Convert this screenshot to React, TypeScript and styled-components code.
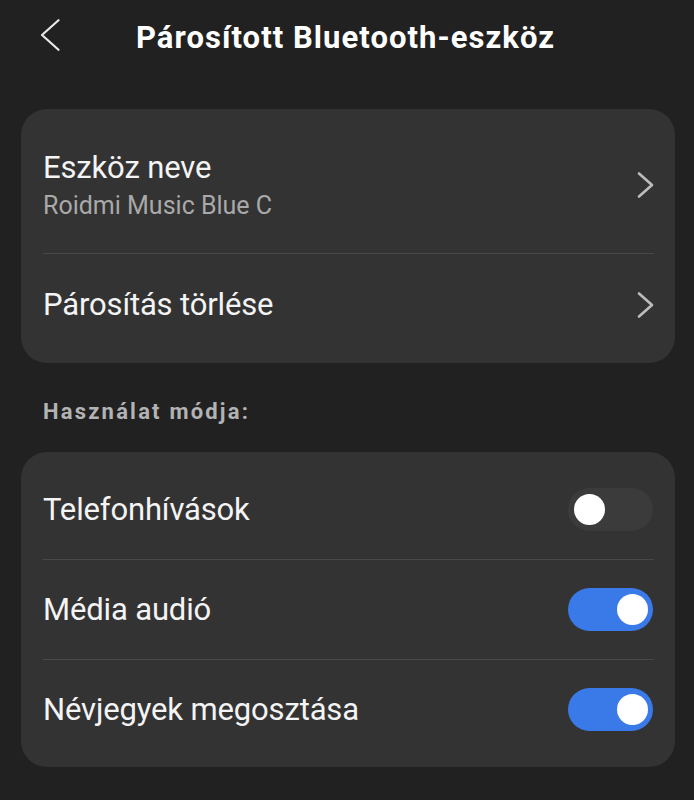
import React from "react";
import styled, { createGlobalStyle } from "styled-components";

const Global = createGlobalStyle`
  html, body { margin: 0; padding: 0; background: #212121; }
  body { font-family: Roboto, "Noto Sans", Arial, sans-serif; -webkit-font-smoothing: antialiased; }
`;

const Page = styled.div`
  width: 694px;
  min-height: 800px;
  background: #212121;
  padding: 0 19px 0 21px;
  box-sizing: border-box;
  display: flex;
  flex-direction: column;
`;

const TopBar = styled.header`
  height: 74px;
  display: flex;
  align-items: center;
  padding-left: 19px;
  gap: 76px;
`;

const BackButton = styled.button`
  background: none;
  border: 0;
  padding: 0;
  width: 20px;
  height: 32px;
  margin-top: -5px;
  display: flex;
  align-items: center;
  justify-content: center;
  color: #e8e8e8;
`;

const Title = styled.h1`
  margin: 0;
  font-size: 31px;
  font-weight: 700;
  color: #ffffff;
  letter-spacing: 1.05px;
`;

const Card = styled.section<{ $top: number }>`
  margin-top: ${(p) => p.$top}px;
  background: #333333;
  border-radius: 26px;
  padding: 8px 0;
  display: flex;
  flex-direction: column;
`;

const Row = styled.div<{ $h: number }>`
  height: ${(p) => p.$h}px;
  display: flex;
  align-items: center;
  justify-content: space-between;
  padding: 0 21px 0 22px;
`;

const Divider = styled.div`
  height: 1px;
  background: #484848;
  margin: 0 21px 0 22px;
`;

const TextBlock = styled.div`
  display: flex;
  flex-direction: column;
  padding-top: 3px;
`;

const Label = styled.div`
  font-size: 31px;
  line-height: 36px;
  color: #f4f4f4;
  letter-spacing: -0.15px;
`;

const Sub = styled.div`
  font-size: 25px;
  line-height: 36px;
  margin-top: 2px;
  color: #a9a9a9;
  letter-spacing: 0px;
`;

const SectionHeader = styled.h2`
  margin: 37px 0 0 22px;
  font-size: 22px;
  font-weight: 700;
  letter-spacing: 2.2px;
  color: #b3b3b3;
  line-height: 24px;
`;

const Track = styled.div<{ $on: boolean }>`
  width: 85px;
  height: 43px;
  border-radius: 22px;
  background: ${(p) => (p.$on ? "#3a7ae8" : "#3b3b3b")};
  display: flex;
  align-items: center;
  justify-content: ${(p) => (p.$on ? "flex-end" : "flex-start")};
  padding: 0 5px 0 6px;
  box-sizing: border-box;
  margin-right: 1px;
`;

const Knob = styled.div`
  width: 31px;
  height: 31px;
  border-radius: 50%;
  background: #ffffff;
`;

const ChevronLeft = () => (
  <svg width="20" height="32" viewBox="0 0 20 32" fill="none">
    <path d="M18.5 1.2 L2 16 L18.5 30.8" stroke="currentColor" strokeWidth="2.2" strokeLinecap="round" strokeLinejoin="round" />
  </svg>
);

const ChevronRight = () => (
  <svg width="17" height="26" viewBox="0 0 17 26" fill="none" style={{ color: "#bcbcbc" }}>
    <path d="M2 1.5 L15 13 L2 24.5" stroke="currentColor" strokeWidth="2.6" strokeLinecap="round" strokeLinejoin="round" />
  </svg>
);

const Toggle = ({ on }: { on: boolean }) => (
  <Track $on={on}>
    <Knob />
  </Track>
);

export default function App() {
  return (
    <>
      <Global />
      <Page>
        <TopBar>
          <BackButton aria-label="Vissza">
            <ChevronLeft />
          </BackButton>
          <Title>Párosított Bluetooth-eszköz</Title>
        </TopBar>

        <Card $top={35}>
          <Row $h={136}>
            <TextBlock>
              <Label>Eszköz neve</Label>
              <Sub>Roidmi Music Blue C</Sub>
            </TextBlock>
            <ChevronRight />
          </Row>
          <Divider />
          <Row $h={101}>
            <Label>Párosítás törlése</Label>
            <ChevronRight />
          </Row>
        </Card>

        <SectionHeader>Használat módja:</SectionHeader>

        <Card $top={28}>
          <Row $h={99}>
            <Label>Telefonhívások</Label>
            <Toggle on={false} />
          </Row>
          <Divider />
          <Row $h={99}>
            <Label>Média audió</Label>
            <Toggle on={true} />
          </Row>
          <Divider />
          <Row $h={99}>
            <Label>Névjegyek megosztása</Label>
            <Toggle on={true} />
          </Row>
        </Card>
      </Page>
    </>
  );
}
